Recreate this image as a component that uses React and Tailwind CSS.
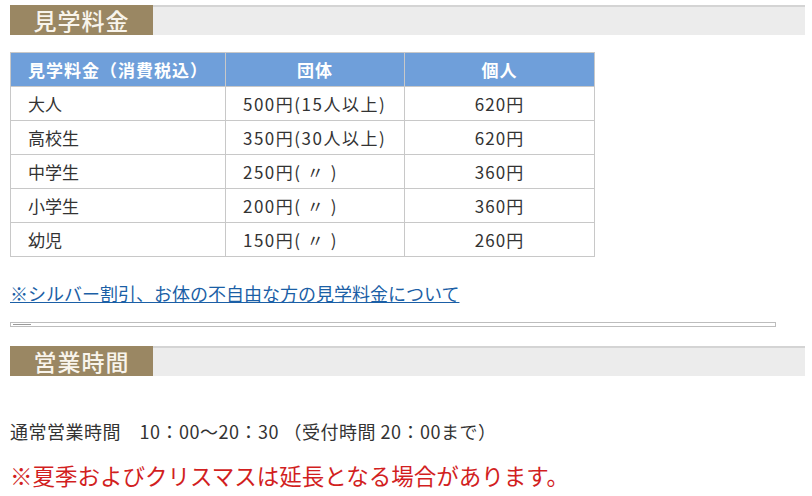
const rows = [
  { name: '大人', group: '500円(15人以上)', single: '620円' },
  { name: '高校生', group: '350円(30人以上)', single: '620円' },
  { name: '中学生', group: '250円( 〃 )', single: '360円' },
  { name: '小学生', group: '200円( 〃 )', single: '360円' },
  { name: '幼児', group: '150円( 〃 )', single: '260円' },
]

const font = { fontFamily: '"Noto Sans CJK JP", "Noto Sans", sans-serif' }

const Heading = ({ children }) => (
  <div className="flex h-[30px] w-[795px]">
    <div className="flex w-[143px] items-center justify-center bg-[#9a8763] text-[23px] font-medium leading-none tracking-[1px] text-[#f8f4ec]">
      {children}
    </div>
    <div className="flex-1 border-t-2 border-[#d4d4d4] bg-[#ececec]" />
  </div>
)

export default function App() {
  return (
    <div className="min-h-[496px] w-[812px] bg-white pl-[10px] pt-[5px] text-[#333]" style={font}>
      <Heading>見学料金</Heading>

      <table className="mt-[17px] w-[585px] border-collapse text-[17px]">
        <thead>
          <tr className="h-[34px] bg-[#6f9fda] text-white">
            <th className="w-[215px] border border-[#c8c8c8] pl-[17px] text-left font-bold tracking-[1px]">見学料金（消費税込）</th>
            <th className="w-[179px] border border-[#c8c8c8] font-bold tracking-[1px]">団体</th>
            <th className="border border-[#c8c8c8] font-bold tracking-[1px]">個人</th>
          </tr>
        </thead>
        <tbody>
          {rows.map((row) => (
            <tr key={row.name} className="h-[34px]">
              <td className="border border-[#c8c8c8] pl-[17px]">{row.name}</td>
              <td className="border border-[#c8c8c8] pl-[17px] tracking-[1.5px]">{row.group}</td>
              <td className="border border-[#c8c8c8] text-center tracking-[1px]">{row.single}</td>
            </tr>
          ))}
        </tbody>
      </table>

      <a href="#" className="mt-[23px] block w-fit text-[18px] leading-[26px] text-[#1b5fa6] underline">
        ※シルバー割引、お体の不自由な方の見学料金について
      </a>

      <div className="mt-[16px] h-[5px] w-[766px] border border-[#bdbdbd]">
        <div className="ml-[2px] mt-[1px] h-px w-[18px] bg-[#9a9a9a]" />
      </div>

      <div className="mt-[19px]">
        <Heading>営業時間</Heading>
      </div>

      <p className="mt-[42px] text-[18px] leading-[26px] tracking-[0.5px]">通常営業時間　10：00～20：30 （受付時間 20：00まで）</p>

      <p className="mt-[16px] text-[22.5px] leading-[30px] text-[#d21f1f]">※夏季およびクリスマスは延長となる場合があります。</p>
    </div>
  )
}
